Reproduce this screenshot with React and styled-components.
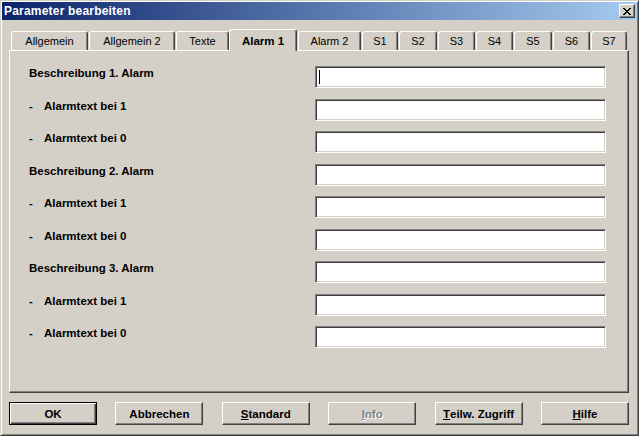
import React from "react";
import styled, { createGlobalStyle } from "styled-components";

const colors = {
  face: "#d4d0c8",
  light: "#ffffff",
  shadow: "#808080",
  dark: "#404040",
  text: "#000000",
};

const GlobalStyle = createGlobalStyle`
  html, body {
    margin: 0;
    padding: 0;
    background: ${colors.face};
  }
  body {
    font-family: "Liberation Sans", Arial, sans-serif;
    font-size: 11px;
    color: ${colors.text};
  }
`;

const tabs = [
  { label: "Allgemein", width: 77 },
  { label: "Allgemein 2", width: 86 },
  { label: "Texte", width: 53 },
  { label: "Alarm 1", width: 68, active: true },
  { label: "Alarm 2", width: 63 },
  { label: "S1", width: 36 },
  { label: "S2", width: 38 },
  { label: "S3", width: 37 },
  { label: "S4", width: 37 },
  { label: "S5", width: 38 },
  { label: "S6", width: 37 },
  { label: "S7", width: 36 },
];

const rows = [1, 2, 3].flatMap((n) => [
  { text: `Beschreibung ${n}. Alarm` },
  { text: "Alarmtext bei 1", sub: true },
  { text: "Alarmtext bei 0", sub: true },
]);

const CloseGlyph = () => (
  <svg width="8" height="7" viewBox="0 0 8 7" shapeRendering="crispEdges">
    <path
      fill="#000"
      d="M0 0h2v1H0zM6 0h2v1H6zM1 1h2v1H1zM5 1h2v1H5zM2 2h4v1H2zM3 3h2v1H3zM2 4h4v1H2zM1 5h2v1H1zM5 5h2v1H5zM0 6h2v1H0zM6 6h2v1H6z"
    />
  </svg>
);

export default function App() {
  return (
    <>
      <GlobalStyle />
      <Window>
        <TitleBar>
          <Title>Parameter bearbeiten</Title>
          <CloseButton>
            <CloseGlyph />
          </CloseButton>
        </TitleBar>
        <Body>
          <TabStrip>
            {tabs.map((t) => (
              <Tab key={t.label} $width={t.width} $active={t.active}>
                {t.label}
              </Tab>
            ))}
          </TabStrip>
          <Panel>
            {rows.map((r, i) => (
              <Row key={i}>
                <Label>
                  {r.sub && <Dash>-</Dash>}
                  {r.text}
                </Label>
                <TextField>{i === 0 && <Caret />}</TextField>
              </Row>
            ))}
          </Panel>
          <ButtonBar>
            <Button $default>OK</Button>
            <Button>Abbrechen</Button>
            <Button>
              <u>S</u>tandard
            </Button>
            <Button $disabled>
              <u>I</u>nfo
            </Button>
            <Button>
              <u>T</u>eilw. Zugriff
            </Button>
            <Button>
              <u>H</u>ilfe
            </Button>
          </ButtonBar>
        </Body>
      </Window>
    </>
  );
}

const Window = styled.div`
  box-sizing: border-box;
  width: 639px;
  height: 436px;
  display: flex;
  flex-direction: column;
  padding: 1px;
  background: ${colors.face};
  border: 1px solid;
  border-color: ${colors.face} ${colors.dark} ${colors.dark} ${colors.face};
  box-shadow: inset 1px 1px ${colors.light}, inset -1px -1px ${colors.shadow};
`;

const TitleBar = styled.div`
  height: 18px;
  display: flex;
  align-items: center;
  justify-content: space-between;
  padding: 0 2px;
  background: linear-gradient(to right, #0a246a, #a6caf0);
`;

const Title = styled.span`
  color: #fff;
  font-weight: bold;
  font-size: 12px;
  letter-spacing: 0.2px;
  line-height: 18px;
`;

const CloseButton = styled.div`
  box-sizing: border-box;
  width: 16px;
  height: 14px;
  display: flex;
  align-items: center;
  justify-content: center;
  background: ${colors.face};
  border: 1px solid;
  border-color: ${colors.light} ${colors.dark} ${colors.dark} ${colors.light};
  box-shadow: inset -1px -1px ${colors.shadow};
`;

const Body = styled.div`
  flex: 1;
  display: flex;
  flex-direction: column;
  padding: 9px 8px 7px 7px;
`;

const TabStrip = styled.div`
  height: 21px;
  display: flex;
  align-items: flex-end;
  gap: 1px;
  padding-left: 2px;
`;

const Tab = styled.div`
  box-sizing: border-box;
  position: relative;
  z-index: ${(p) => (p.$active ? 1 : 0)};
  width: ${(p) => p.$width}px;
  height: ${(p) => (p.$active ? 22 : 19)}px;
  margin-left: ${(p) => (p.$active ? -1 : 0)}px;
  margin-bottom: ${(p) => (p.$active ? -1 : 0)}px;
  padding-top: ${(p) => (p.$active ? 5 : 3)}px;
  text-align: center;
  line-height: 13px;
  font-weight: ${(p) => (p.$active ? "bold" : "normal")};
  font-size: ${(p) => (p.$active ? 11.5 : 11)}px;
  background: ${colors.face};
  border: 1px solid;
  border-bottom: none;
  border-color: ${colors.light} ${colors.dark} transparent ${colors.light};
  border-radius: 3px 3px 0 0;
  box-shadow: inset -1px 0 ${colors.shadow};
`;

const Panel = styled.div`
  box-sizing: border-box;
  height: 343px;
  display: flex;
  flex-direction: column;
  padding: 15px 0 0 19px;
  border: 1px solid;
  border-color: ${colors.light} ${colors.dark} ${colors.dark} ${colors.light};
  box-shadow: inset -1px -1px ${colors.shadow};
`;

const Row = styled.div`
  height: 32.5px;
  display: grid;
  grid-template-columns: 286px 291px;
  align-items: start;
`;

const Label = styled.div`
  display: flex;
  font-weight: bold;
  font-size: 11.5px;
  line-height: 13px;
  padding-top: 1px;
`;

const Dash = styled.span`
  width: 15px;
`;

const TextField = styled.div`
  box-sizing: border-box;
  height: 22px;
  padding: 3px 3px;
  background: #fff;
  border: 1px solid;
  border-color: ${colors.shadow} ${colors.light} ${colors.light} ${colors.shadow};
  box-shadow: inset 1px 1px ${colors.dark}, inset -1px -1px ${colors.face};
`;

const Caret = styled.div`
  width: 1px;
  height: 14px;
  background: #000;
`;

const ButtonBar = styled.div`
  display: flex;
  justify-content: space-between;
  margin-top: 9px;
`;

const Button = styled.div`
  box-sizing: border-box;
  width: 88px;
  height: 23px;
  display: flex;
  align-items: center;
  justify-content: center;
  font-weight: bold;
  font-size: 11.5px;
  background: ${colors.face};
  color: ${(p) => (p.$disabled ? colors.shadow : colors.text)};
  text-shadow: ${(p) => (p.$disabled ? `1px 1px ${colors.light}` : "none")};
  border: 1px solid ${colors.text};
  border-color: ${(p) =>
    p.$default
      ? colors.text
      : `${colors.light} ${colors.dark} ${colors.dark} ${colors.light}`};
  box-shadow: ${(p) =>
    p.$default
      ? `inset 1px 1px ${colors.light}, inset -1px -1px ${colors.dark}, inset -2px -2px ${colors.shadow}`
      : `inset -1px -1px ${colors.shadow}`};
`;
